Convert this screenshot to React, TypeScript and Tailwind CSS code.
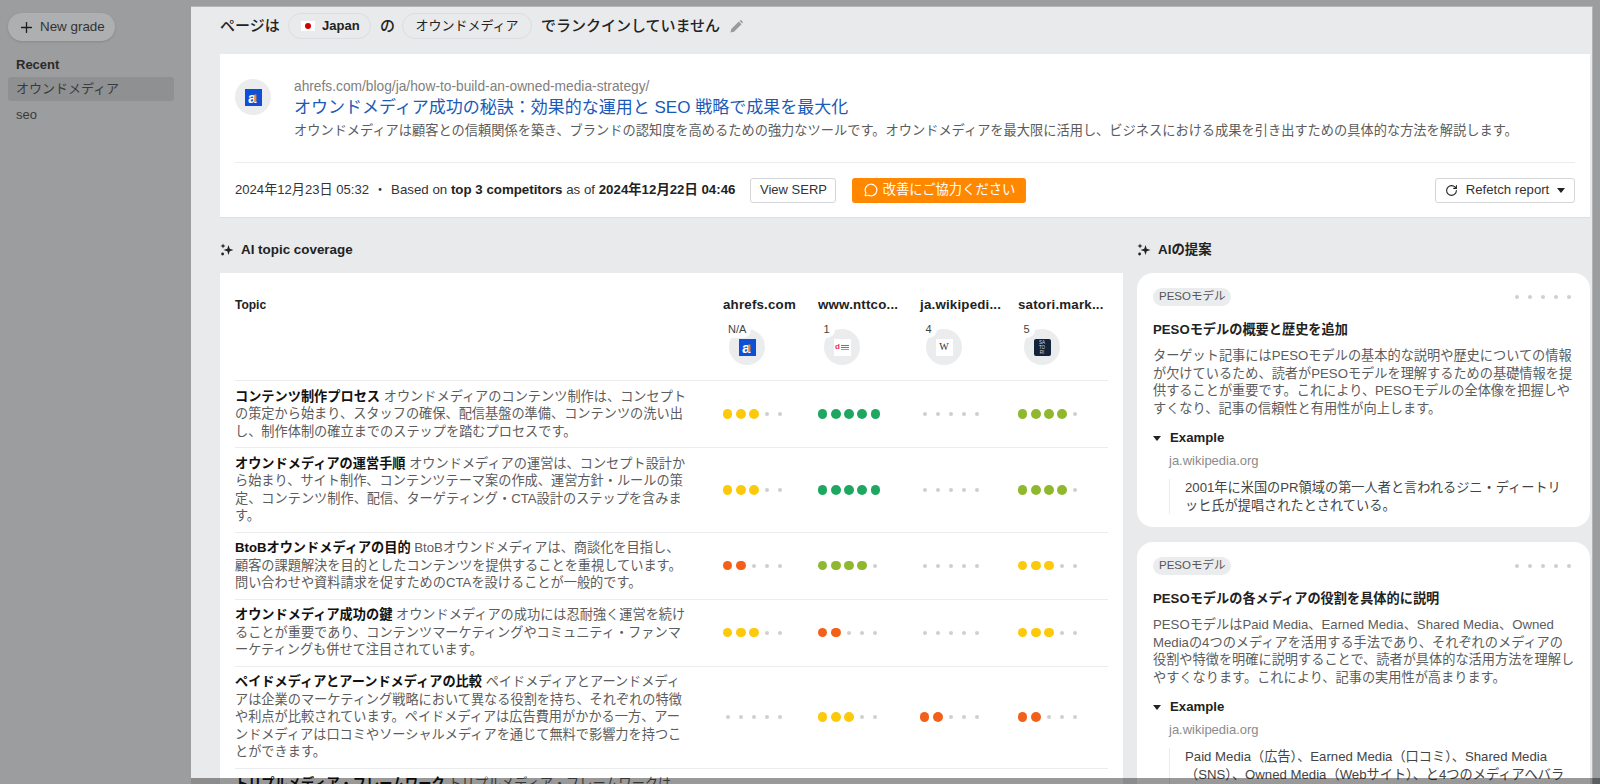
import React from "react";
import { Plus, RotateCw, MessageCircle } from "lucide-react";

const font = { fontFamily: '"Liberation Sans","Noto Sans CJK JP",sans-serif' };

function Sparkle() {
  return (
    <svg width="14" height="14" viewBox="0 0 14 14" className="shrink-0" fill="#222">
      <path d="M8.5 2 L9.7 5.8 L13.5 7 L9.7 8.2 L8.5 12 L7.3 8.2 L3.5 7 L7.3 5.8 Z" />
      <path d="M3 0.5 L3.7 2.3 L5.5 3 L3.7 3.7 L3 5.5 L2.3 3.7 L0.5 3 L2.3 2.3 Z" />
      <circle cx="2.6" cy="11" r="1.4" />
    </svg>
  );
}

function Caret({ className = "" }: { className?: string }) {
  return (
    <svg width="8" height="5" viewBox="0 0 8 5" className={className} fill="#222">
      <path d="M0 0 H8 L4 5 Z" />
    </svg>
  );
}

function AhrefsLogo() {
  return (
    <svg width="17" height="17" viewBox="0 0 17 17">
      <rect width="17" height="17" fill="#0f4fd8" />
      <text x="3" y="13.5" fontSize="15" fontWeight="700" fill="#fff" fontFamily="Liberation Sans">a</text>
      <rect x="9.2" y="5.5" width="2.2" height="7.5" fill="#f58a1f" />
    </svg>
  );
}

function NttLogo() {
  return (
    <div className="flex h-[17px] w-[17px] items-center justify-center gap-[1px] bg-white">
      <span className="text-[8px] font-bold leading-none text-[#e0344a]">d</span>
      <span className="flex flex-col gap-[1px]">
        <span className="block h-[1px] w-[8px] bg-[#777]" />
        <span className="block h-[1px] w-[8px] bg-[#777]" />
        <span className="block h-[1px] w-[8px] bg-[#999]" />
      </span>
    </div>
  );
}

function WikiLogo() {
  return (
    <div className="flex h-[17px] w-[17px] items-center justify-center bg-white text-[10px] leading-none text-[#333]" style={{ fontFamily: '"Liberation Serif",serif' }}>
      W
    </div>
  );
}

function SatoriLogo() {
  return (
    <div className="flex h-[17px] w-[17px] flex-col items-center justify-center overflow-hidden rounded-[2px] bg-[#12233a] text-[4.5px] leading-[5px] text-[#d5dbe3]">
      <span>SA</span>
      <span>TO</span>
      <span>RI</span>
    </div>
  );
}

function Dots({ n, color }: { n: number; color?: string }) {
  return (
    <div className="flex items-center">
      {[0, 1, 2, 3, 4].map((i) => (
        <span key={i} className="flex h-[10px] w-[13.2px] items-center justify-center">
          {i < n ? (
            <span className="block h-[9.5px] w-[9.5px] rounded-full" style={{ backgroundColor: color }} />
          ) : (
            <span className="block h-[4px] w-[4px] rounded-full bg-[#cfcfd1]" />
          )}
        </span>
      ))}
    </div>
  );
}

const Y = "#fdc90b";
const G = "#1ea760";
const L = "#8fb82f";
const O = "#f2601a";

const rows: { b: string; t: string; d: [number, string][] }[] = [
  {
    b: "コンテンツ制作プロセス",
    t: "オウンドメディアのコンテンツ制作は、コンセプトの策定から始まり、スタッフの確保、配信基盤の準備、コンテンツの洗い出し、制作体制の確立までのステップを踏むプロセスです。",
    d: [[3, Y], [5, G], [0, ""], [4, L]],
  },
  {
    b: "オウンドメディアの運営手順",
    t: "オウンドメディアの運営は、コンセプト設計から始まり、サイト制作、コンテンツテーマ案の作成、運営方針・ルールの策定、コンテンツ制作、配信、ターゲティング・CTA設計のステップを含みます。",
    d: [[3, Y], [5, G], [0, ""], [4, L]],
  },
  {
    b: "BtoBオウンドメディアの目的",
    t: "BtoBオウンドメディアは、商談化を目指し、顧客の課題解決を目的としたコンテンツを提供することを重視しています。問い合わせや資料請求を促すためのCTAを設けることが一般的です。",
    d: [[2, O], [4, L], [0, ""], [3, Y]],
  },
  {
    b: "オウンドメディア成功の鍵",
    t: "オウンドメディアの成功には忍耐強く運営を続けることが重要であり、コンテンツマーケティングやコミュニティ・ファンマーケティングも併せて注目されています。",
    d: [[3, Y], [2, O], [0, ""], [3, Y]],
  },
  {
    b: "ペイドメディアとアーンドメディアの比較",
    t: "ペイドメディアとアーンドメディアは企業のマーケティング戦略において異なる役割を持ち、それぞれの特徴や利点が比較されています。ペイドメディアは広告費用がかかる一方、アーンドメディアは口コミやソーシャルメディアを通じて無料で影響力を持つことができます。",
    d: [[0, ""], [3, Y], [2, O], [2, O]],
  },
  {
    b: "トリプルメディア・フレームワーク",
    t: "トリプルメディア・フレームワークは、ペイドメディア、アーンドメディア、オウンドメディアの3つを組み合わせて活用する考え方で、それぞれの特徴を活かしてマーケティング効果を高めることができます。",
    d: [[0, ""], [0, ""], [0, ""], [0, ""]],
  },
];

const cols = "grid grid-cols-[488px_95px_102px_98px_90px]";

function Competitor({ name, badge, logo, ml }: { name: string; badge: string; logo: React.ReactNode; ml: string }) {
  return (
    <div>
      <div className="whitespace-nowrap text-[13.3px] font-bold leading-[16px] tracking-[0.2px] text-[#222]">{name}</div>
      <div className={`relative mt-[16px] flex h-[36px] w-[36px] items-center justify-center rounded-full bg-[#ebecee] ${ml}`}>
        {logo}
        <span className="absolute left-[-6px] top-[-8px] flex h-[17px] min-w-[17px] items-center justify-center rounded-full bg-white px-[5px] text-[11px] leading-none text-[#444]">
          {badge}
        </span>
      </div>
    </div>
  );
}

function Suggestion({ title, body, source, quote, className = "" }: { title: string; body: string; source: string; quote: React.ReactNode; className?: string }) {
  return (
    <div className={`rounded-[16px] bg-white pl-[16px] pr-[14px] pt-[15px] ${className}`}>
      <div className="flex items-center justify-between">
        <span className="flex h-[18px] items-center rounded-full bg-[#ebecee] px-[6px] text-[11.5px] text-[#555]">PESOモデル</span>
        <Dots n={0} />
      </div>
      <div className="mt-[14px] text-[13.2px] font-bold leading-[20px] text-[#222]">{title}</div>
      <p className="mt-[7px] text-[13.2px] leading-[17.5px] text-[#5c5c5c]">{body}</p>
      <div className="mt-[11px] flex items-center gap-[9px] text-[13.2px] font-bold leading-[20px] text-[#222]">
        <Caret />
        Example
      </div>
      <div className="ml-[16px] mt-[3px] text-[13px] leading-[20px] text-[#8b8b8b]">{source}</div>
      <div className="ml-[16px] mt-[8px] border-l border-[#ebecee] pl-[15px] pr-[10px] text-[13.2px] leading-[17.5px] text-[#444]">{quote}</div>
    </div>
  );
}

export default function App() {
  return (
    <div className="relative flex h-[784px] w-[1600px] overflow-hidden bg-[#9c9d9f]" style={font}>
      <aside className="w-[191px] shrink-0 px-[8px] pt-[13px]">
        <div className="flex h-[28px] w-[107px] items-center gap-[5px] rounded-full bg-[#aeafb0] pl-[10px] text-[13.4px] text-[#333] shadow-sm">
          <Plus size={17} strokeWidth={1.8} color="#1c1c1c" />
          New grade
        </div>
        <div className="mt-[15px] px-[8px] text-[13px] font-bold leading-[18px] text-[#2a2a2a]">Recent</div>
        <div className="mt-[3px] flex h-[24px] w-[166px] items-center rounded-[3px] bg-[#8f9092] px-[8px] text-[13px] text-[#3a3a3a]">オウンドメディア</div>
        <div className="mt-[2px] flex h-[24px] items-center px-[8px] text-[13px] text-[#3a3a3a]">seo</div>
      </aside>

      <main className="mr-[7px] mt-[6px] min-w-0 flex-1 overflow-hidden border-r border-t border-[#b4b5b7] bg-[#e9eaec] pl-[29px] pr-[2px]">
        <div className="flex h-[47px] items-start pt-[6px] text-[15px] font-medium leading-[26px] text-[#222]">
          <span className="w-[68px]">ページは</span>
          <span className="flex h-[26px] w-[83px] items-center gap-[7px] rounded-full border border-[#dcdde0] pl-[12px] text-[13px] font-bold">
            <span className="flex h-[10px] w-[14px] items-center justify-center bg-white">
              <span className="block h-[6px] w-[6px] rounded-full bg-[#d30000]" />
            </span>
            Japan
          </span>
          <span className="ml-[9px] w-[22px]">の</span>
          <span className="flex h-[26px] w-[130px] items-center justify-center rounded-full border border-[#dcdde0] text-[13px] font-normal">オウンドメディア</span>
          <span className="ml-[9px]">でランクインしていません</span>
          <svg width="13" height="13" viewBox="0 0 13 13" className="ml-[10px] mt-[7px]" fill="#9a9a9c">
            <path d="M0.5 12.5 L1.3 9 L8.8 1.5 L11.5 4.2 L4 11.7 Z M9.6 0.8 L10.4 0.2 Q11 -0.1 11.5 0.4 L12.6 1.5 Q13 2 12.7 2.6 L12.2 3.4 Z" />
          </svg>
        </div>

        <section className="h-[164px] border-b border-[#dfe0e2] bg-white px-[15px]">
          <div className="flex h-[109px] items-start border-b border-[#ebecee] pt-[25px]">
            <div className="flex h-[36px] w-[36px] shrink-0 items-center justify-center rounded-full bg-[#ebecee]">
              <AhrefsLogo />
            </div>
            <div className="ml-[23px] min-w-0">
              <div className="text-[13.75px] leading-[16px] text-[#808080]">ahrefs.com/blog/ja/how-to-build-an-owned-media-strategy/</div>
              <div className="mt-[1px] text-[17px] leading-[24px] text-[#1a5ab8]">オウンドメディア成功の秘訣：効果的な運用と SEO 戦略で成果を最大化</div>
              <div className="mt-[2px] whitespace-nowrap text-[13.23px] leading-[18px] text-[#5c5c5c]">オウンドメディアは顧客との信頼関係を築き、ブランドの認知度を高めるための強力なツールです。オウンドメディアを最大限に活用し、ビジネスにおける成果を引き出すための具体的な方法を解説します。</div>
            </div>
          </div>
          <div className="flex h-[54px] items-center text-[13.1px] text-[#333]">
            <span>2024年12月23日 05:32</span>
            <span className="mx-[4.5px]">・</span>
            <span className="text-[13.3px]">Based on <b className="text-[#222]">top 3 competitors</b> as of <b className="text-[#222]">2024年12月22日 04:46</b></span>
            <span className="ml-[15px] flex h-[25px] w-[86px] items-center justify-center rounded-[3px] border border-[#d4d5d8] text-[13px] text-[#333]">View SERP</span>
            <span className="ml-[16px] flex h-[25px] w-[174px] items-center justify-center gap-[5px] rounded-[3px] bg-[#ff8800] text-[13.3px] text-white">
              <MessageCircle size={14} strokeWidth={2} />
              改善にご協力ください
            </span>
            <span className="ml-auto flex h-[25px] w-[140px] items-center justify-center gap-[8px] rounded-[3px] border border-[#d4d5d8] text-[13.2px] text-[#333]">
              <RotateCw size={13} strokeWidth={2} color="#222" />
              Refetch report
              <Caret />
            </span>
          </div>
        </section>

        <div className="mt-[9px] flex gap-[14px]">
          <div className="w-[903px] shrink-0">
            <div className="flex h-[46px] items-center gap-[7px] text-[13.4px] font-bold text-[#222]">
              <Sparkle />
              AI topic coverage
            </div>
            <div className="h-[600px] bg-white pl-[15px] pr-[15px]">
              <div className={`${cols} h-[108px] border-b border-[#ebecee] pt-[24px]`}>
                <div className="text-[12px] font-bold leading-[16px] text-[#222]">Topic</div>
                <Competitor name="ahrefs.com" badge="N/A" logo={<AhrefsLogo />} ml="ml-[6px]" />
                <Competitor name="www.nttco..." badge="1" logo={<NttLogo />} ml="ml-[6px]" />
                <Competitor name="ja.wikipedi..." badge="4" logo={<WikiLogo />} ml="ml-[6px]" />
                <Competitor name="satori.mark..." badge="5" logo={<SatoriLogo />} ml="ml-[6px]" />
              </div>
              {rows.map((r) => (
                <div key={r.b} className={`${cols} items-center border-b border-[#ebecee] py-[6.75px]`}>
                  <p className="w-[455px] text-[13.2px] leading-[17.5px] text-[#5c5c5c]">
                    <b className="text-[#111]">{r.b}</b> {r.t}
                  </p>
                  {r.d.map(([n, c], i) => (
                    <div key={i} className="ml-[-2px]">
                      <Dots n={n} color={c} />
                    </div>
                  ))}
                </div>
              ))}
            </div>
          </div>

          <div className="min-w-0 flex-1">
            <div className="flex h-[46px] items-center gap-[7px] text-[13.4px] font-bold text-[#222]">
              <Sparkle />
              AIの提案
            </div>
            <Suggestion
              className="h-[254px]"
              title="PESOモデルの概要と歴史を追加"
              body="ターゲット記事にはPESOモデルの基本的な説明や歴史についての情報が欠けているため、読者がPESOモデルを理解するための基礎情報を提供することが重要です。これにより、PESOモデルの全体像を把握しやすくなり、記事の信頼性と有用性が向上します。"
              source="ja.wikipedia.org"
              quote="2001年に米国のPR領域の第一人者と言われるジニ・ディートリッヒ氏が提唱されたとされている。"
            />
            <Suggestion
              className="mt-[15px] h-[300px]"
              title="PESOモデルの各メディアの役割を具体的に説明"
              body="PESOモデルはPaid Media、Earned Media、Shared Media、Owned Mediaの4つのメディアを活用する手法であり、それぞれのメディアの役割や特徴を明確に説明することで、読者が具体的な活用方法を理解しやすくなります。これにより、記事の実用性が高まります。"
              source="ja.wikipedia.org"
              quote="Paid Media（広告）、Earned Media（口コミ）、Shared Media（SNS）、Owned Media（Webサイト）、と4つのメディアへバランスよく情報を発信する手法。"
            />
          </div>
        </div>
      </main>

      <div className="absolute bottom-0 left-[191px] right-0 h-[6px] bg-black/40" />
    </div>
  );
}
